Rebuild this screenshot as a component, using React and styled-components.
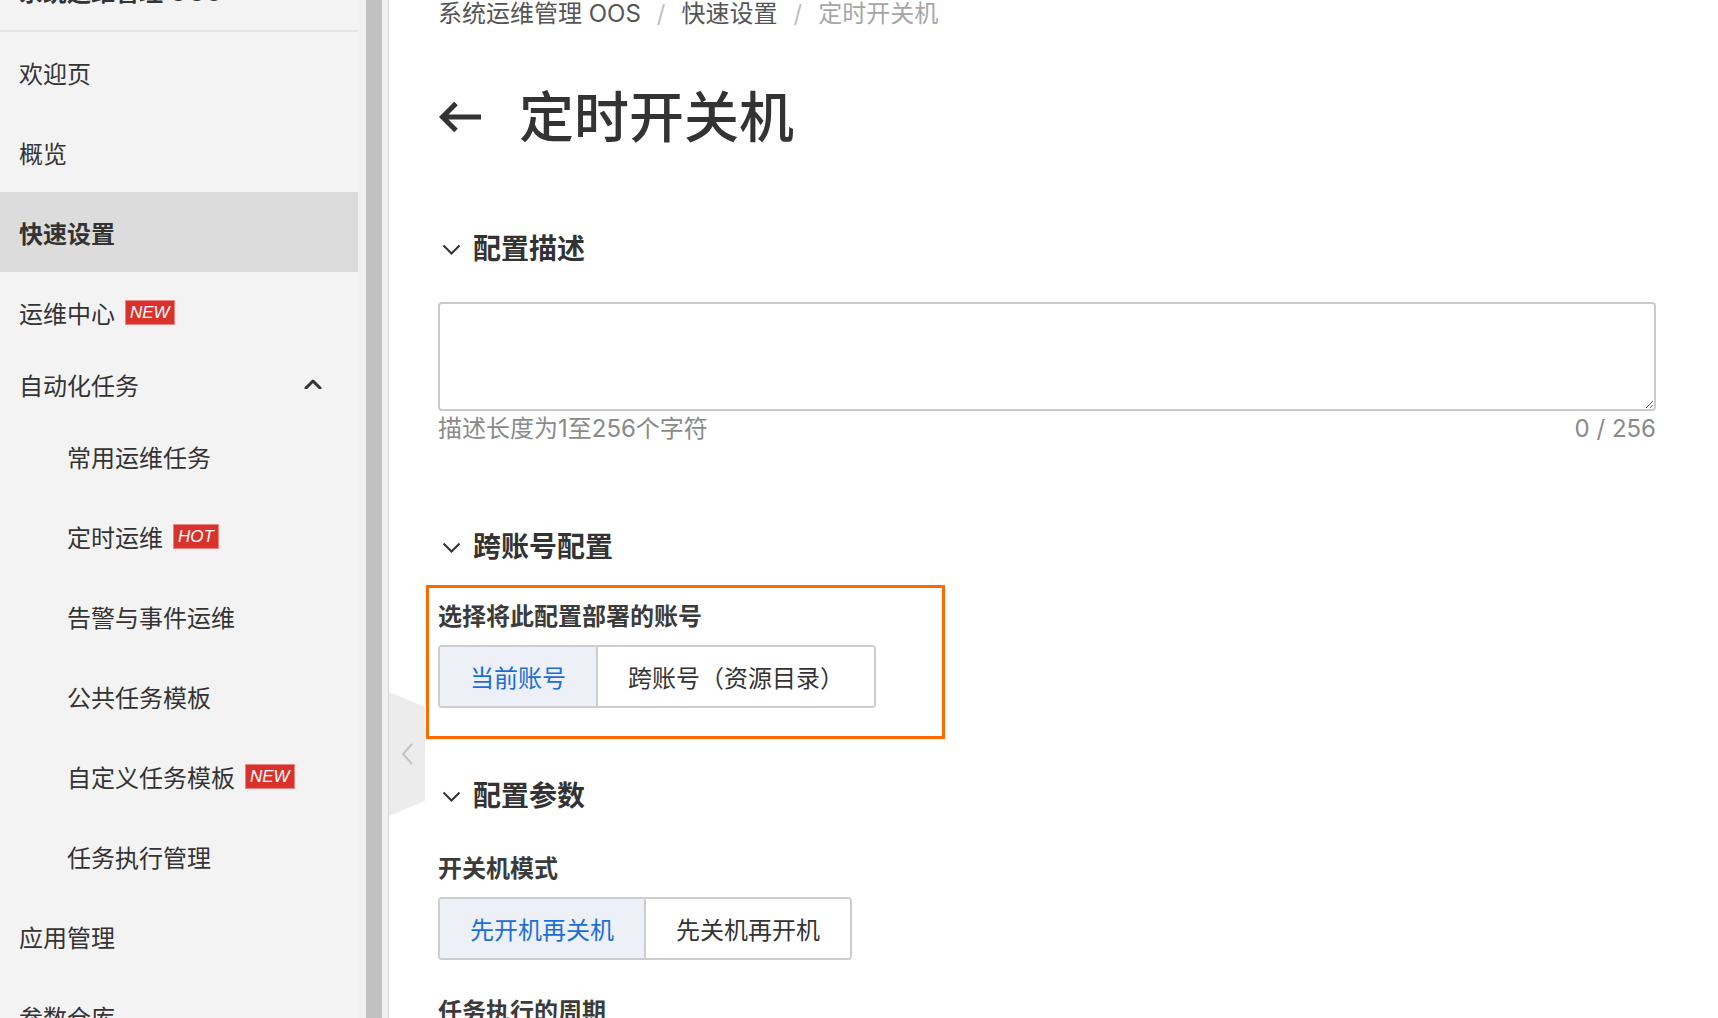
import React from "react";
import styled, { createGlobalStyle } from "styled-components";

const Global = createGlobalStyle`
  html, body { margin: 0; padding: 0; background: #fff; }
  body { font-family: "Inter", "Noto Sans CJK SC", sans-serif; color: #333; }
  * { box-sizing: border-box; }
`;

const Page = styled.div`
  display: flex;
  width: 1718px;
  height: 1018px;
  overflow: hidden;
`;

const Sidebar = styled.aside`
  width: 358px;
  flex: none;
  background: #f3f3f3;
  display: flex;
  flex-direction: column;
  overflow: hidden;
`;

const SideTitle = styled.div`
  height: 32px;
  flex: none;
  border-bottom: 2px solid #e4e4e4;
  padding: 0 19px;
  overflow: hidden;
`;

const SideTitleText = styled.div`
  margin-top: -23px;
  font-size: 24px;
  line-height: 32px;
  font-weight: 600;
  color: #333;
  white-space: nowrap;
`;

const NavItem = styled.div`
  height: ${(p) => p.$h || 80}px;
  flex: none;
  display: flex;
  align-items: center;
  padding: 0 36px 0 ${(p) => (p.$sub ? 67 : 19)}px;
  font-size: 24px;
  color: #333;
  font-weight: ${(p) => (p.$active ? 600 : 400)};
  background: ${(p) => (p.$active ? "#dcdcdc" : "transparent")};
  white-space: nowrap;
`;

const NavLabel = styled.span`
  flex: 1;
  display: flex;
  align-items: center;
`;

const Badge = styled.span`
  margin-left: 10px;
  height: 25px;
  padding: 0 4px;
  background: #d9312b;
  border: 1px solid #ee8781;
  color: #fff;
  font-family: "Liberation Sans", sans-serif;
  font-style: italic;
  font-size: 17px;
  line-height: 23px;
  display: inline-flex;
  align-items: center;
`;

const ScrollTrack = styled.div`
  width: 31px;
  flex: none;
  background: #f1f1f1;
  border-right: 1px solid #d6d6d6;
  padding: 0 6px 0 8px;
  display: flex;
`;

const ScrollThumb = styled.div`
  width: 16px;
  background: #c1c1c1;
`;

const Main = styled.main`
  flex: 1;
  position: relative;
  background: #fff;
  padding: 0 62px 0 49px;
  display: flex;
  flex-direction: column;
  overflow: hidden;
`;

const CollapseTab = styled.div`
  position: absolute;
  left: 0;
  top: 692px;
  width: 36px;
  height: 124px;
  background: #ececec;
  clip-path: polygon(0 0, 100% 12%, 100% 88%, 0 100%);
  display: flex;
  align-items: center;
  justify-content: center;
`;

const Breadcrumb = styled.nav`
  height: 28px;
  display: flex;
  align-items: center;
  font-size: 24px;
  line-height: 28px;
  color: #555;
  white-space: nowrap;
`;

const Sep = styled.span`
  margin: 0 16px;
  color: #c0c0c0;
`;

const Crumb = styled.span`
  color: ${(p) => (p.$current ? "#a6a6a6" : "#555")};
`;

const TitleRow = styled.div`
  margin-top: 57px;
  height: 64px;
  display: flex;
  align-items: center;
  gap: 36px;
`;

const Title = styled.h1`
  margin: 0;
  font-size: 55px;
  line-height: 64px;
  font-weight: 500;
  color: #333;
`;

const SectionHeader = styled.div`
  margin-top: ${(p) => p.$mt}px;
  height: 36px;
  display: flex;
  align-items: center;
  gap: 11px;
  font-size: 28px;
  line-height: 36px;
  font-weight: 600;
  color: #333;
`;

const TextArea = styled.textarea`
  margin-top: 35px;
  width: 100%;
  height: 109px;
  flex: none;
  border: 2px solid #cacaca;
  border-radius: 4px;
  resize: vertical;
  background: #fff;
  font-size: 22px;
  font-family: inherit;
  outline: none;
  padding: 10px 14px;
`;

const HelpRow = styled.div`
  margin-top: 4px;
  height: 28px;
  display: flex;
  justify-content: space-between;
  align-items: center;
  font-size: 24px;
  line-height: 28px;
  color: #8a8a8a;
`;

const Highlight = styled.div`
  margin: 20px 0 0 -12px;
  width: 519px;
  border: 3px solid #ff6a00;
  padding: 13px 9px 28px;
  display: flex;
  flex-direction: column;
  align-items: flex-start;
`;

const FieldLabel = styled.div`
  margin-top: ${(p) => p.$mt || 0}px;
  font-size: 24px;
  line-height: 32px;
  font-weight: 600;
  color: #3b3b3b;
  white-space: nowrap;
`;

const Segmented = styled.div`
  margin-top: 12px;
  align-self: flex-start;
  display: inline-flex;
  height: 63px;
  flex: none;
  border: 2px solid #cdcdcd;
  border-radius: 4px;
  overflow: hidden;
`;

const Segment = styled.div`
  display: flex;
  align-items: center;
  padding: 0 30px;
  font-size: 24px;
  color: ${(p) => (p.$active ? "#1c6ed6" : "#333")};
  background: ${(p) => (p.$active ? "#edf1f7" : "#fff")};
  white-space: nowrap;
  & + & {
    border-left: 2px solid #cdcdcd;
  }
`;

const Chevron = ({ up }) => (
  <svg width="18" height="10" viewBox="0 0 18 10">
    <path
      d={up ? "M2 9 L9 2 L16 9" : "M2 1 L9 8 L16 1"}
      fill="none"
      stroke="#333"
      strokeWidth="3"
      strokeLinecap="round"
      strokeLinejoin="round"
    />
  </svg>
);

const SectionChevron = () => (
  <svg width="24" height="24" viewBox="0 0 24 24">
    <path d="M5.5 8.5 L13.5 16.5 L21.5 8.5" fill="none" stroke="#333" strokeWidth="2" />
  </svg>
);

const BackArrow = () => (
  <svg width="45" height="34" viewBox="0 0 45 34">
    <path
      d="M5 17 H43 M18 3.5 L4.5 17 L18 30.5"
      fill="none"
      stroke="#333"
      strokeWidth="5"
      strokeLinejoin="miter"
    />
  </svg>
);

const TabChevron = () => (
  <svg width="14" height="24" viewBox="0 0 14 24">
    <path d="M12 2 L3 12 L12 22" fill="none" stroke="#c2c2c2" strokeWidth="2" />
  </svg>
);

const nav = [
  { label: "欢迎页" },
  { label: "概览" },
  { label: "快速设置", active: true },
  { label: "运维中心", badge: "NEW" },
  { label: "自动化任务", group: true, h: 64 },
  { label: "常用运维任务", sub: true },
  { label: "定时运维", sub: true, badge: "HOT" },
  { label: "告警与事件运维", sub: true },
  { label: "公共任务模板", sub: true },
  { label: "自定义任务模板", sub: true, badge: "NEW" },
  { label: "任务执行管理", sub: true },
  { label: "应用管理" },
  { label: "参数仓库" },
];

export default function App() {
  return (
    <>
      <Global />
      <Page>
        <Sidebar>
          <SideTitle>
            <SideTitleText>系统运维管理 OOS</SideTitleText>
          </SideTitle>
          {nav.map((n) => (
            <NavItem key={n.label} $h={n.h} $sub={n.sub} $active={n.active}>
              <NavLabel>
                {n.label}
                {n.badge && <Badge>{n.badge}</Badge>}
              </NavLabel>
              {n.group && <Chevron up />}
            </NavItem>
          ))}
        </Sidebar>
        <ScrollTrack>
          <ScrollThumb />
        </ScrollTrack>
        <Main>
          <CollapseTab>
            <TabChevron />
          </CollapseTab>
          <Breadcrumb>
            <Crumb>系统运维管理 OOS</Crumb>
            <Sep>/</Sep>
            <Crumb>快速设置</Crumb>
            <Sep>/</Sep>
            <Crumb $current>定时开关机</Crumb>
          </Breadcrumb>
          <TitleRow>
            <BackArrow />
            <Title>定时开关机</Title>
          </TitleRow>

          <SectionHeader $mt={82}>
            <SectionChevron />
            配置描述
          </SectionHeader>
          <TextArea />
          <HelpRow>
            <span>描述长度为1至256个字符</span>
            <span>0 / 256</span>
          </HelpRow>

          <SectionHeader $mt={86}>
            <SectionChevron />
            跨账号配置
          </SectionHeader>
          <Highlight>
            <FieldLabel>选择将此配置部署的账号</FieldLabel>
            <Segmented>
              <Segment $active>当前账号</Segment>
              <Segment>跨账号（资源目录）</Segment>
            </Segmented>
          </Highlight>

          <SectionHeader $mt={39}>
            <SectionChevron />
            配置参数
          </SectionHeader>
          <FieldLabel $mt={39}>开关机模式</FieldLabel>
          <Segmented>
            <Segment $active>先开机再关机</Segment>
            <Segment>先关机再开机</Segment>
          </Segmented>
          <FieldLabel $mt={36}>任务执行的周期</FieldLabel>
        </Main>
      </Page>
    </>
  );
}
